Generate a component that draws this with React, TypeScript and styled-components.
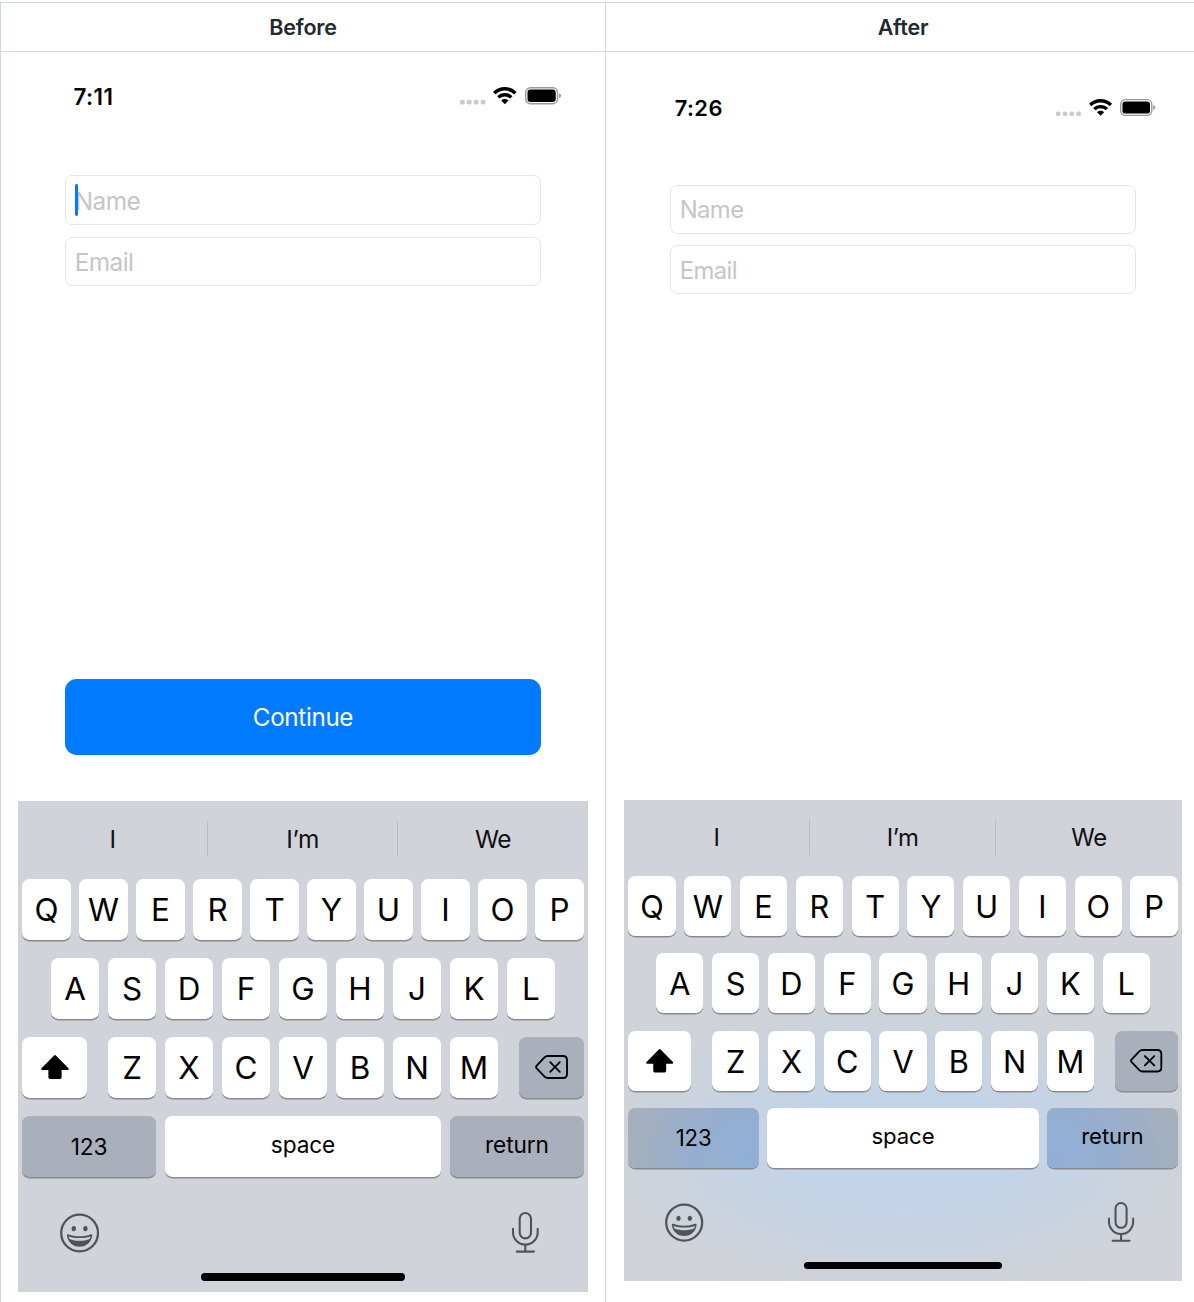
import React from "react";
import styled, { createGlobalStyle, css } from "styled-components";

const GlobalStyle = createGlobalStyle`
  *, *::before, *::after { box-sizing: border-box; }
  body { margin: 0; background: #fff; overflow: hidden; }
`;

/* Device points, scaled by the --pt unit each phone sets. */
const pt = (n: number) => `calc(var(--pt) * ${n})`;

const Page = styled.div`
  width: 1194px;
  height: 1302px;
  padding-top: 2px;
  overflow: hidden;
  font-family: Inter, "Liberation Sans", sans-serif;
  color: #000;
`;

const Comparison = styled.div`
  display: grid;
  grid-template-columns: 605px 595px;
  grid-template-rows: 50px 1260px;
  width: 1200px;
  border-top: 1px solid #d0d7de;
`;

const HeaderCell = styled.div`
  display: flex;
  align-items: center;
  justify-content: center;
  border-left: 1px solid #d0d7de;
  border-bottom: 1px solid #d0d7de;
  margin-bottom: 1px;
  color: #24292f;
  font-size: 21.5px;
  font-weight: 600;
  letter-spacing: -0.2px;
`;

const PhoneCell = styled.div<{ $top: number }>`
  display: flex;
  justify-content: center;
  align-items: flex-start;
  border-left: 1px solid #d0d7de;
  margin-top: -1px;
  padding-top: ${(p) => p.$top}px;
`;

const Phone = styled.div<{ $width: number; $height: number }>`
  --pt: ${(p) => p.$width / 390}px;
  display: flex;
  flex-direction: column;
  width: ${(p) => p.$width}px;
  height: ${(p) => p.$height}px;
`;

const StatusBar = styled.div<{ $inset: number }>`
  display: flex;
  align-items: center;
  justify-content: space-between;
  height: ${pt(51.4)};
  margin-bottom: ${pt(0.6)};
  padding: 0 ${pt(18.8)} 0 ${(p) => pt(p.$inset)};
`;

const Clock = styled.span`
  padding-top: ${pt(0.6)};
  font-size: ${pt(15.3)};
  font-weight: 600;
  letter-spacing: 0.02em;
`;

const StatusIcons = styled.div`
  display: flex;
  align-items: center;
  gap: ${pt(5.4)};
`;

const Icon = styled.svg<{ $w: number; $h: number }>`
  display: block;
  flex: none;
  overflow: visible;
  width: ${(p) => pt(p.$w / 1.4615)};
  height: ${(p) => pt(p.$h / 1.4615)};
`;

const Form = styled.div`
  display: flex;
  flex-direction: column;
  flex: 1;
  gap: ${pt(8)};
  padding: ${pt(28)} ${pt(32)} ${pt(31.6)};
`;

const Field = styled.div`
  display: flex;
  align-items: center;
  position: relative;
  height: ${pt(34)};
  padding: ${pt(1)} ${pt(6.2)} 0;
  border: 1px solid #e5e5e6;
  border-radius: ${pt(5)};
  color: #c5c5c7;
  font-size: ${pt(16.7)};
  letter-spacing: -0.025em;
`;

const Caret = styled.span`
  position: absolute;
  left: ${pt(6.4)};
  top: ${pt(5.4)};
  width: ${pt(2)};
  height: ${pt(22)};
  border-radius: ${pt(1)};
  background: #007aff;
`;

const ContinueButton = styled.button`
  height: ${pt(52)};
  margin-top: auto;
  padding: ${pt(0.5)} 0 0;
  border: 0;
  border-radius: ${pt(8)};
  background: #007aff;
  color: #fff;
  font-family: inherit;
  font-size: ${pt(16.6)};
  letter-spacing: -0.015em;
`;

const KeyboardPanel = styled.div<{ $tinted: boolean }>`
  display: flex;
  flex-direction: column;
  height: ${pt(336)};
  background: #d0d3d9;
  ${(p) =>
    p.$tinted &&
    css`
      background: radial-gradient(
          ellipse 60% 34% at 50% 72%,
          rgba(194, 212, 234, 1) 0%,
          rgba(194, 212, 233, 0.9) 35%,
          rgba(194, 211, 231, 0.62) 58%,
          rgba(197, 211, 227, 0.3) 76%,
          rgba(202, 211, 222, 0.1) 90%,
          rgba(208, 211, 217, 0) 100%
        )
        #d0d3d9;
    `}
`;

const Suggestions = styled.div`
  display: grid;
  grid-template-columns: ${pt(129.4)} ${pt(130)} 1fr;
  align-items: center;
  height: ${pt(53.2)};
  padding-bottom: ${pt(1.4)};
`;

const Suggestion = styled.span`
  display: flex;
  align-items: center;
  justify-content: center;
  height: ${pt(25)};
  font-size: ${pt(16.7)};
  letter-spacing: -0.015em;
  color: #111;
  & + & {
    border-left: 1px solid #b8bbc1;
  }
`;

const KeyRows = styled.div`
  display: flex;
  flex-direction: column;
  gap: ${pt(12)};
  padding: 0 ${pt(3)};
`;

const KeyRow = styled.div<{ $spread?: boolean }>`
  display: flex;
  justify-content: ${(p) => (p.$spread ? "space-between" : "center")};
  gap: ${pt(6)};
`;

const Letters = styled.div`
  display: flex;
  gap: ${pt(6)};
`;

const Key = styled.div<{ $width?: number; $fill?: string; $word?: boolean; $lift?: number }>`
  display: flex;
  align-items: center;
  justify-content: center;
  flex: none;
  width: ${(p) => pt(p.$width ?? 33)};
  height: ${pt(42)};
  padding-bottom: ${(p) => pt(p.$lift ?? 0)};
  border-radius: ${pt(5)};
  background: ${(p) => p.$fill ?? "#fff"};
  box-shadow: 0 ${pt(1)} 0 #898b8f;
  font-size: ${(p) => pt(p.$word ? 15.5 : 21.5)};
  letter-spacing: ${(p) => (p.$word ? "-0.005em" : "-0.02em")};
`;

const LetterKey = styled(Key)`
  padding-top: ${pt(0.6)};
  padding-right: ${pt(0.4)};
`;

const BottomBar = styled.div`
  display: flex;
  align-items: center;
  justify-content: space-between;
  height: ${pt(28)};
  margin-top: ${pt(24)};
  padding: 0 ${pt(33.5)} 0 ${pt(28.8)};
`;

const HomeIndicator = styled.div`
  width: ${pt(139)};
  height: ${pt(5)};
  margin: auto auto ${pt(8)};
  border-radius: ${pt(2.5)};
  background: #000;
`;

const DotsIcon = () => (
  <Icon $w={25.5} $h={17.5} viewBox="0 0 25.5 17.5" fill="#cacaca">
    {[0, 6.9, 13.8, 20.7].map((x) => (
      <rect key={x} x={x} y="12.8" width="4.7" height="4.7" rx="1.6" />
    ))}
  </Icon>
);

const WifiIcon = () => (
  <Icon $w={23.7} $h={17.3} viewBox="0 0 23.7 17.3" fill="none" stroke="#000">
    <path d="M1.3 6.2A14.9 14.9 0 0 1 22.4 6.2" strokeWidth="3.5" />
    <path d="M5.4 10.4A9.1 9.1 0 0 1 18.3 10.4" strokeWidth="3.4" />
    <path d="M8.2 13.5A5.2 5.2 0 0 1 15.5 13.5L11.85 17.2Z" fill="#000" stroke="none" />
  </Icon>
);

const BatteryIcon = () => (
  <Icon $w={36} $h={17.5} viewBox="0 0 36 17.5">
    <rect x="0.7" y="0.7" width="31.8" height="16" rx="4.8" fill="none" stroke="#999" strokeWidth="1.4" />
    <rect x="2.5" y="2.5" width="28.2" height="12.4" rx="3" fill="#000" />
    <path d="M34 6.2C35.2 6.7 36 7.6 36 8.7S35.2 10.8 34 11.2Z" fill="#999" />
  </Icon>
);

const ShiftIcon = () => (
  <Icon $w={28} $h={24} viewBox="0 0 28 24">
    <path
      d="M13.1.5Q14 -.3 14.9.5L27.5 13.2Q28.6 14.9 26.8 15.1H20.6V22.3Q20.6 24 18.9 24H9.1Q7.4 24 7.4 22.3V15.1H1.2Q-.6 14.9.5 13.2Z"
      fill="#000"
    />
  </Icon>
);

const DeleteIcon = () => (
  <Icon $w={33} $h={24} viewBox="0 0 33 24" fill="none" stroke="#000" strokeWidth="1.9" strokeLinecap="round" strokeLinejoin="round">
    <path d="M1.5 10.8L9.5 2.4Q10.9 1 12.8 1H28Q32 1 32 5V19Q32 23 28 23H12.8Q10.9 23 9.5 21.6L1.5 13.2Q.5 12 1.5 10.8Z" />
    <path d="M15.2 7.2L24.8 16.8M24.8 7.2L15.2 16.8" />
  </Icon>
);

const EmojiIcon = () => (
  <Icon $w={39.2} $h={39.2} viewBox="-19.6 -20 39.2 39.2" fill="#505458">
    <circle r="18.4" fill="none" stroke="#505458" strokeWidth="2.3" />
    <ellipse cx="-5.8" cy="-4.4" rx="2.2" ry="2.7" />
    <ellipse cx="5.8" cy="-4.4" rx="2.2" ry="2.7" />
    <path
      fillRule="evenodd"
      d="M-12.7 2.2C-12.7 1.3 -12 .9 -11.2 1.3C-4.5 4 4.5 4 11.2 1.3C12 .9 12.7 1.3 12.7 2.2C12 8.8 7 13.7 0 13.7S-12 8.8 -12.7 2.2ZM-11 3.4C-10.8 4.7 -10.2 5.6 -9.4 6.3C-3.5 8.3 3.5 8.3 9.4 6.3C10.2 5.6 10.8 4.7 11 3.4C4.3 5.6 -4.3 5.6 -11 3.4Z"
    />
  </Icon>
);

const MicIcon = () => (
  <Icon $w={26.7} $h={41} viewBox="0 0 26.7 41" fill="none" stroke="#505458" strokeWidth="2.1" strokeLinecap="round">
    <rect x="7.7" y="1" width="11.3" height="25.4" rx="5.65" />
    <path d="M1 16.8V20.3A12.35 12.35 0 0 0 25.7 20.3V16.8M13.35 32.7V39.5M4.7 39.6H22" />
  </Icon>
);

const GRAY = "#aab0bb";
const TINT_LEFT = "radial-gradient(ellipse 110% 190% at 102% 85%, #90afd7 0%, #95aecf 45%, #a2afc0 85%, #a6b0bc 100%)";
const TINT_RIGHT = "radial-gradient(ellipse 110% 190% at -2% 85%, #90afd7 0%, #95aecf 45%, #a2afc0 85%, #a6b0bc 100%)";

const renderKeys = (letters: string) => letters.split("").map((letter) => <LetterKey key={letter}>{letter}</LetterKey>);

const Keyboard = ({ tinted = false }: { tinted?: boolean }) => (
  <KeyboardPanel $tinted={tinted}>
    <Suggestions>
      <Suggestion>I</Suggestion>
      <Suggestion>I’m</Suggestion>
      <Suggestion>We</Suggestion>
    </Suggestions>
    <KeyRows>
      <KeyRow>{renderKeys("QWERTYUIOP")}</KeyRow>
      <KeyRow>{renderKeys("ASDFGHJKL")}</KeyRow>
      <KeyRow $spread>
        <Key $width={44}>
          <ShiftIcon />
        </Key>
        <Letters>{renderKeys("ZXCVBNM")}</Letters>
        <Key $width={44} $fill={GRAY} $lift={0.6}>
          <DeleteIcon />
        </Key>
      </KeyRow>
      <KeyRow>
        <Key $word $width={91.25} $fill={tinted ? TINT_LEFT : GRAY}>
          123
        </Key>
        <Key $word $width={189.5} $lift={2.4}>
          space
        </Key>
        <Key $word $width={91.25} $lift={2.4} $fill={tinted ? TINT_RIGHT : GRAY}>
          return
        </Key>
      </KeyRow>
    </KeyRows>
    <BottomBar>
      <EmojiIcon />
      <MicIcon />
    </BottomBar>
    <HomeIndicator />
  </KeyboardPanel>
);

interface ScreenProps {
  time: string;
  clockInset: number;
  width: number;
  height: number;
  focused?: boolean;
  showButton?: boolean;
  tinted?: boolean;
}

const Screen = ({ time, clockInset, width, height, focused, showButton, tinted }: ScreenProps) => (
  <Phone $width={width} $height={height}>
    <StatusBar $inset={clockInset}>
      <Clock>{time}</Clock>
      <StatusIcons>
        <DotsIcon />
        <WifiIcon />
        <BatteryIcon />
      </StatusIcons>
    </StatusBar>
    <Form>
      <Field>
        Name
        {focused && <Caret />}
      </Field>
      <Field>Email</Field>
      {showButton && <ContinueButton>Continue</ContinueButton>}
    </Form>
    <Keyboard tinted={tinted} />
  </Phone>
);

export default function App() {
  return (
    <>
      <GlobalStyle />
      <Page>
        <Comparison>
          <HeaderCell>Before</HeaderCell>
          <HeaderCell>After</HeaderCell>
          <PhoneCell $top={6.5}>
            <Screen time="7:11" clockInset={37.9} width={570} height={1233.7} focused showButton />
          </PhoneCell>
          <PhoneCell $top={18.5}>
            <Screen time="7:26" clockInset={35.4} width={558} height={1210.3} tinted />
          </PhoneCell>
        </Comparison>
      </Page>
    </>
  );
}
